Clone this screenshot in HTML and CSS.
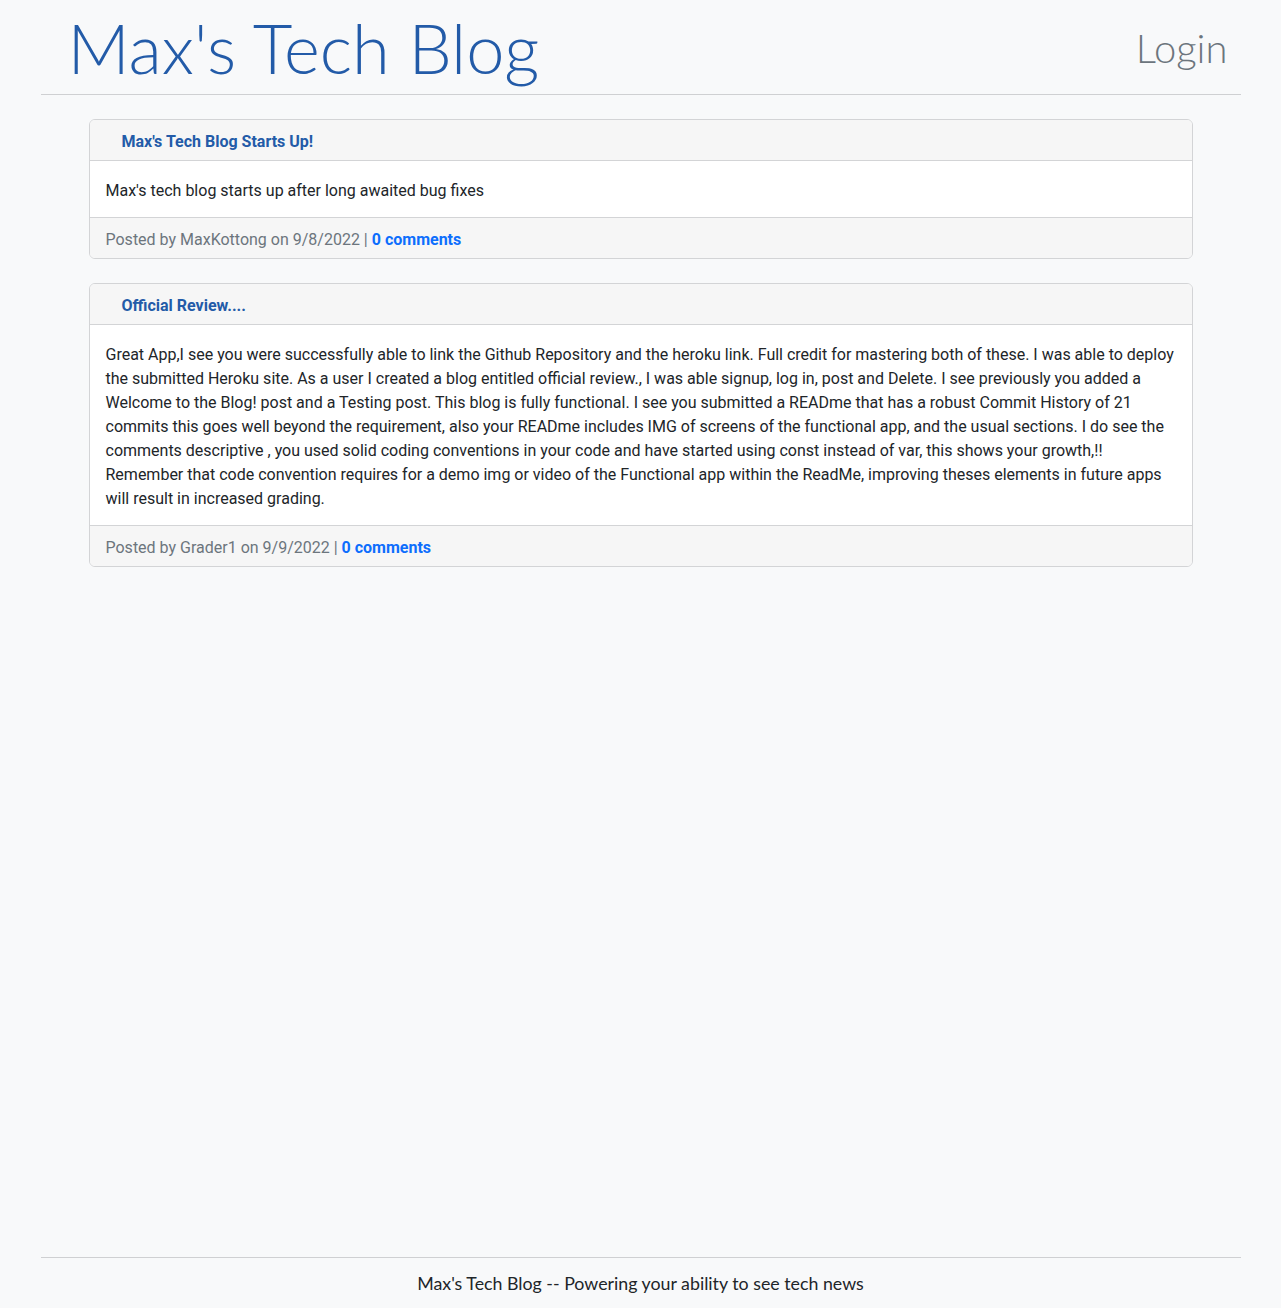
FILE: index.html
```html
<!DOCTYPE html>
<html lang="en">
<head>
<meta charset="utf-8">
<title>Max's Tech Blog</title>
<link rel="stylesheet" href="styles.css">
</head>
<body>
<div class="page">
  <header class="site-header">
    <h1 class="brand">Max's Tech Blog</h1>
    <a class="login" href="#">Login</a>
  </header>
  <main class="posts">
    <article class="card">
      <div class="card-header"><a class="post-title" href="#">Max's Tech Blog Starts Up!</a></div>
      <div class="card-body">Max's tech blog starts up after long awaited bug fixes</div>
      <div class="card-footer">Posted by MaxKottong on 9/8/2022 | <a class="comments" href="#">0 comments</a></div>
    </article>
    <article class="card">
      <div class="card-header"><a class="post-title" href="#">Official Review....</a></div>
      <div class="card-body">Great App,I see you were successfully able to link the Github Repository and the heroku link. Full credit for mastering both of these. I was able to deploy the submitted Heroku site. As a user I created a blog entitled official review., I was able signup, log in, post and Delete. I see previously you added a Welcome to the Blog! post and a Testing post. This blog is fully functional. I see you submitted a READme that has a robust Commit History of 21 commits this goes well beyond the requirement, also your READme includes IMG of screens of the functional app, and the usual sections. I do see the comments descriptive , you used solid coding conventions in your code and have started using const instead of var, this shows your growth,!! Remember that code convention requires for a demo img or video of the Functional app within the ReadMe, improving theses elements in future apps will result in increased grading.</div>
      <div class="card-footer">Posted by Grader1 on 9/9/2022 | <a class="comments" href="#">0 comments</a></div>
    </article>
  </main>
  <footer class="site-footer">Max's Tech Blog -- Powering your ability to see tech news</footer>
</div>
</body>
</html>
```
FILE: styles.css
```css
* { box-sizing: border-box; }
html, body { margin: 0; padding: 0; }
body {
  background: #f8f9fa;
  color: #212529;
  font-family: Roboto, "Liberation Sans", sans-serif;
  font-size: 16px;
  line-height: 24px;
}
.page {
  max-width: 1200px;
  margin: 0 auto;
  min-height: 100vh;
  display: flex;
  flex-direction: column;
}
.site-header {
  display: flex;
  justify-content: space-between;
  align-items: center;
  height: 95px;
  padding: 0 13px 0 27px;
  border-bottom: 1px solid #cfd0d2;
}
.brand {
  margin: 0;
  font-family: Lato, sans-serif;
  font-weight: 300;
  font-size: 68.6px;
  line-height: 94px;
  color: #235ba8;
  padding-top: 1px;
}
.login {
  font-family: Lato, sans-serif;
  color: #6c757d;
  font-weight: 300;
  font-size: 40px;
  text-decoration: none;
  padding-top: 1px;
}
.posts {
  flex: 1;
  padding: 24px 48px;
}
.card {
  background: #fff;
  border: 1px solid #d3d4d6;
  border-radius: 6px;
  margin-bottom: 24px;
  overflow: hidden;
}
.card-header {
  background: #f6f6f6;
  border-bottom: 1px solid #d3d4d6;
  padding: 10px 32px 6px;
}
.post-title {
  color: #235ba8;
  font-weight: 700;
  text-decoration: none;
}
.card-body {
  padding: 18px 16px 14px;
}
.card-footer {
  background: #f6f6f6;
  border-top: 1px solid #d3d4d6;
  padding: 10px 16px 6px;
  color: #6c757d;
}
.comments {
  color: #0d6efd;
  font-weight: 700;
  text-decoration: none;
}
.site-footer {
  font-family: Lato, sans-serif;
  border-top: 1px solid #cfd0d2;
  text-align: center;
  font-size: 17.8px;
  line-height: 27px;
  padding: 12px 0 11px;
}
```
